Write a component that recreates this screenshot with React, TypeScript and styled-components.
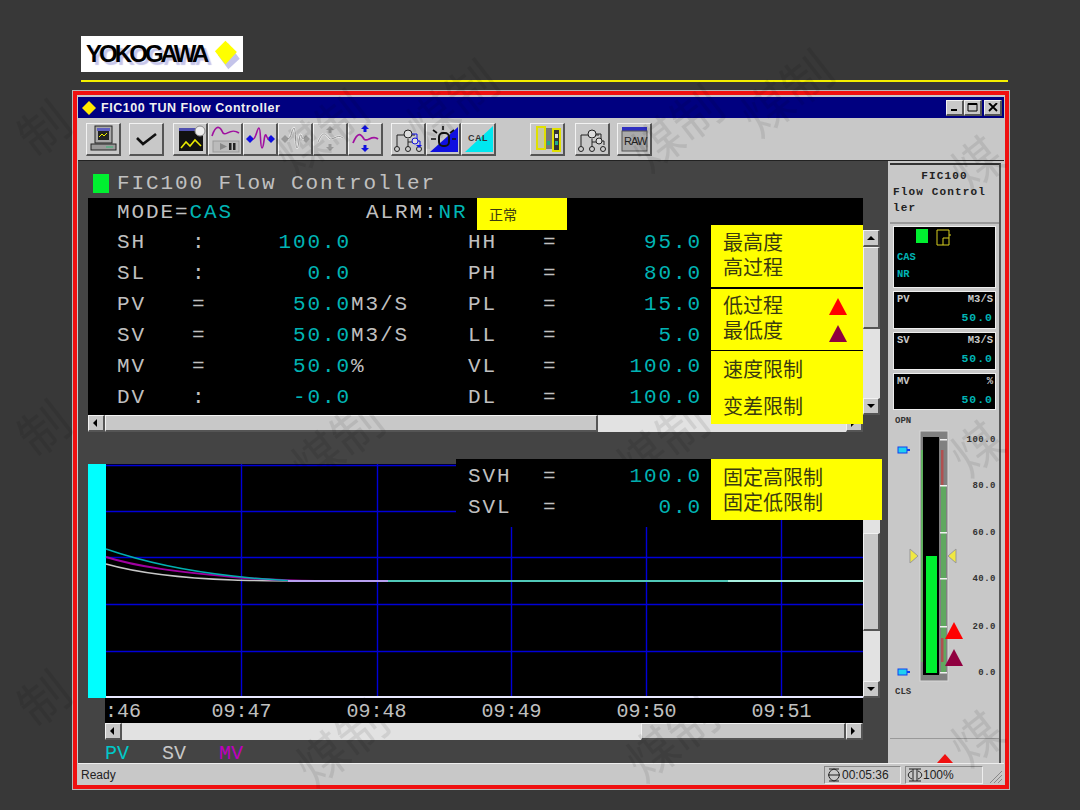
import React from 'react'
import styled, { createGlobalStyle, css } from 'styled-components'

const GRAY = '#c8c8c8'
const TEAL = '#00b4b4'
const MONO = '"Liberation Mono", monospace'
const CJK = '"Noto Sans CJK SC", sans-serif'

const GlobalStyle = createGlobalStyle`
  html, body { margin: 0; padding: 0; background: #383838; }
  * { box-sizing: border-box; }
`

const raised = css`
  border-style: solid;
  border-width: 1px 2px 2px 1px;
  border-color: #f2f2f2 #555 #555 #f2f2f2;
`

const Page = styled.div`
  position: relative;
  width: 1080px;
  height: 810px;
  overflow: hidden;
  padding: 36px 70px 0 72px;
  background: #383838;
`

const LogoBox = styled.div`
  display: flex;
  align-items: center;
  gap: 8px;
  width: 162px;
  height: 36px;
  margin-left: 9px;
  padding-left: 5px;
  background: #fff;
`

const LogoText = styled.span`
  font: bold 24px "Liberation Sans", sans-serif;
  letter-spacing: -2.95px;
  color: #000;
  text-shadow: 3px 3px 1px #c4c4ea;
`

const Rule = styled.div`
  width: 927px;
  height: 2px;
  margin: 8px 0 8px 9px;
  background: #f4f000;
`

const Frame = styled.div`
  width: 938px;
  height: 700px;
  padding: 1px;
  background: #b8b8b8;
`

const RedFrame = styled.div`
  height: 100%;
  border: 4px solid #f01010;
  background: ${GRAY};
  padding: 2px 1px 0;
`

const TitleBar = styled.div`
  display: flex;
  align-items: center;
  height: 21px;
  padding: 0 2px 0 3px;
  background: #000080;
`

const TitleText = styled.span`
  margin-left: 4px;
  font: bold 12.5px "Liberation Sans", sans-serif;
  letter-spacing: 0.54px;
  color: #f0f0f0;
`

const CaptionButtons = styled.div`
  display: flex;
  margin-left: auto;
`

const CaptionButton = styled.div<{ $gap?: number }>`
  display: flex;
  align-items: center;
  justify-content: center;
  width: 18px;
  height: 16px;
  margin-left: ${(p) => p.$gap ?? 0}px;
  background: ${GRAY};
  ${raised}
`

const Toolbar = styled.div`
  display: flex;
  align-items: center;
  height: 42px;
  padding: 0 0 0 8px;
  background: ${GRAY};
`

const ToolGroup = styled.div<{ $after: number }>`
  display: flex;
  margin-right: ${(p) => p.$after}px;
`

const ToolButton = styled.div`
  display: flex;
  align-items: center;
  justify-content: center;
  width: 35px;
  height: 33px;
  background: ${GRAY};
  ${raised}
`

const Body = styled.div`
  display: flex;
  height: 603px;
  border-top: 1px solid #222;
`

const LeftPane = styled.div`
  position: relative;
  width: 810px;
  padding: 2px 0 0 10px;
  background: #444;
`

const Heading = styled.div`
  display: flex;
  align-items: center;
  height: 35px;
  padding: 6px 0 0 5px;
  font: 21px ${MONO};
  letter-spacing: 1.9px;
  color: #c0c0c0;
`

const Lamp = styled.span`
  width: 16px;
  height: 19px;
  margin-right: 8px;
  background: #00f030;
`

const PanelRow = styled.div`
  display: flex;
`

const DataPanel = styled.div`
  width: 775px;
  height: 217px;
  padding-left: 29px;
  background: #000;
  overflow: hidden;
  font: 21px ${MONO};
  letter-spacing: 1.9px;
  color: #c0c0c0;
`

const ModeRow = styled.div`
  display: flex;
  align-items: center;
  height: 30px;
  margin-top: -1px;
`

const ModeCell = styled.span`
  width: 249px;
`

const Teal = styled.span`
  color: ${TEAL};
`

const DataRow = styled.div`
  display: grid;
  grid-template-columns: 75px 40px 119px 117px 75px 40px 119px;
  align-items: center;
  height: 31px;
`

const Value = styled.span`
  text-align: right;
  color: ${TEAL};
`

const VScroll = styled.div<{ $top: number; $height: number }>`
  display: flex;
  flex-direction: column;
  width: 17px;
  height: ${(p) => p.$height}px;
  margin-top: ${(p) => p.$top}px;
  background: #e2e2e2;
`

const HScroll = styled.div<{ $inset?: number }>`
  display: flex;
  width: ${(p) => 775 - (p.$inset ?? 0)}px;
  height: 17px;
  margin-left: ${(p) => p.$inset ?? 0}px;
  background: #e2e2e2;
`

const ScrollArrow = styled.div`
  flex: none;
  display: flex;
  align-items: center;
  justify-content: center;
  width: 17px;
  height: 17px;
  background: ${GRAY};
  font-size: 0;
  ${raised}
`

const Thumb = styled.div<{ $size: number }>`
  flex: 0 0 ${(p) => p.$size}px;
  background: ${GRAY};
  ${raised}
`

const Track = styled.div<{ $size?: number }>`
  flex: ${(p) => (p.$size ? `0 0 ${p.$size}px` : '1')};
`

const ChartGap = styled.div`
  height: 32px;
`

const ChartSvg = styled.svg`
  display: block;
  width: 775px;
  height: 234px;
  background: #000;
`

const TimeAxis = styled.div`
  display: flex;
  align-items: center;
  width: 758px;
  height: 25px;
  margin-left: 17px;
  padding-top: 2px;
  background: #000;
  font: 20px ${MONO};
  color: #c0c0c0;
`

const TimeCell = styled.span<{ $first?: boolean }>`
  flex: 0 0 ${(p) => (p.$first ? 69 : 135)}px;
  text-align: ${(p) => (p.$first ? 'left' : 'center')};
`

const Legend = styled.div`
  display: flex;
  gap: 33px;
  height: 22px;
  padding: 2px 0 0 17px;
  font: 20px/24px ${MONO};
`

const LegendItem = styled.span<{ $color: string }>`
  color: ${(p) => p.$color};
`

const Note = styled.div<{ $left: number; $top: number; $width: number; $height: number }>`
  position: absolute;
  left: ${(p) => p.$left}px;
  top: ${(p) => p.$top}px;
  width: ${(p) => p.$width}px;
  height: ${(p) => p.$height}px;
  padding-left: 12px;
  background: #ffff00;
  font: 20px/25px ${CJK};
  color: #3a3a10;
`

const NoteLine = styled.div<{ $mt?: number }>`
  margin-top: ${(p) => p.$mt ?? 0}px;
`

const SmallNote = styled(Note)`
  font-size: 14px;
  line-height: 32px;
`

const Triangle = styled.span<{ $color: string; $top: number }>`
  position: absolute;
  left: 118px;
  top: ${(p) => p.$top}px;
  width: 0;
  height: 0;
  border-left: 9px solid transparent;
  border-right: 9px solid transparent;
  border-bottom: 17px solid ${(p) => p.$color};
`

const BlackCover = styled.div`
  position: absolute;
  left: 378px;
  top: 298px;
  width: 255px;
  height: 68px;
  padding: 2px 0 0 12px;
  background: #000;
  font: 21px ${MONO};
  letter-spacing: 1.9px;
  color: #c0c0c0;
`

const CoverRow = styled.div`
  display: grid;
  grid-template-columns: 75px 40px 119px;
  align-items: center;
  height: 31px;
`

const Faceplate = styled.div`
  width: 111px;
  margin: 2px 0 0 2px;
  background: ${GRAY};
  border-right: 2px solid #555;
  border-top: 2px solid #333;
  display: flex;
  flex-direction: column;
`

const PlateTitle = styled.div`
  flex: none;
  height: 59px;
  padding: 3px 3px 0;
  border-bottom: 2px solid #999;
  font: bold 11px/16px ${MONO};
  letter-spacing: 1.15px;
  color: #222;
  word-break: break-all;
`

const PlateCenter = styled.div`
  text-align: center;
`

const Readouts = styled.div`
  flex: none;
  display: flex;
  flex-direction: column;
  gap: 3px;
  padding: 2px 3px 0;
`

const Readout = styled.div<{ $height: number }>`
  position: relative;
  height: ${(p) => p.$height}px;
  padding: 0 2px 0 3px;
  background: #000;
  border: 1px solid #eee;
  font: bold 10.5px/14px ${MONO};
  color: ${GRAY};
`

const ReadoutHead = styled.div`
  display: flex;
  justify-content: space-between;
`

const ReadoutValue = styled.div`
  margin-top: 5px;
  text-align: right;
  font-size: 11.5px;
  letter-spacing: 1px;
  color: ${TEAL};
`

const ModeLine = styled.div<{ $mt: number }>`
  margin-top: ${(p) => p.$mt}px;
  color: ${TEAL};
`

const LampRow = styled.div`
  display: flex;
  align-items: flex-start;
  gap: 8px;
  padding: 2px 0 0 19px;
`

const PlateLamp = styled.span`
  width: 12px;
  height: 14px;
  background: #00f030;
`

const GaugeSvg = styled.svg`
  display: block;
  flex: none;
  width: 109px;
  height: 328px;
`

const PlateFoot = styled.div`
  position: relative;
  flex: 1;
  border-top: 1px solid #999;
  overflow: hidden;
`

const FootMark = styled.span`
  position: absolute;
  left: 47px;
  bottom: 0;
  width: 0;
  height: 0;
  border-left: 8px solid transparent;
  border-right: 8px solid transparent;
  border-bottom: 9px solid #f01010;
`

const StatusBar = styled.div`
  display: flex;
  align-items: center;
  height: 22px;
  padding: 0 0 0 3px;
  border-top: 1px solid #eee;
  font: 12px "Liberation Sans", sans-serif;
  color: #222;
`

const StatusCell = styled.div<{ $width: number; $first?: boolean }>`
  display: flex;
  align-items: center;
  width: ${(p) => p.$width}px;
  height: 18px;
  margin-left: ${(p) => (p.$first ? 'auto' : '4px')};
  padding-left: 1px;
  border: 1px solid;
  border-color: #888 #eee #eee #888;
`

const Grip = styled.svg`
  width: 19px;
  height: 18px;
  margin-left: 2px;
`

const Watermark = styled.div<{ $x: number; $y: number }>`
  position: absolute;
  left: ${(p) => p.$x}px;
  top: ${(p) => p.$y}px;
  font: 50px ${CJK};
  color: #000;
  opacity: 0.08;
  white-space: nowrap;
  transform: rotate(-38deg);
  pointer-events: none;
`

const marks: [number, number, string][] = [
  [17, 90, '制'], [270, 95, '煤制'], [400, 65, '煤制'], [625, 90, '煤制'], [735, 55, '煤制'],
  [950, 125, '煤'], [17, 390, '制'], [285, 405, '煤制'], [610, 405, '煤制'], [950, 410, '煤'],
  [17, 660, '制'], [290, 705, '煤制'], [620, 700, '煤制'], [950, 700, '煤'],
]

const upper = [
  ['SH', ':', '100.0', '', 'HH', '=', '95.0'],
  ['SL', ':', '0.0', '', 'PH', '=', '80.0'],
  ['PV', '=', '50.0', 'M3/S', 'PL', '=', '15.0'],
  ['SV', '=', '50.0', 'M3/S', 'LL', '=', '5.0'],
  ['MV', '=', '50.0', '%', 'VL', '=', '100.0'],
  ['DV', ':', '-0.0', '', 'DL', '=', '100.0'],
]

const Arrow = ({ dir }: { dir: 'up' | 'down' | 'left' | 'right' }) => {
  const pts = {
    up: '1,6 9,6 5,2',
    down: '1,2 9,2 5,6',
    left: '6,0 6,8 2,4',
    right: '2,0 2,8 6,4',
  }[dir]
  return (
    <svg width="10" height="8" viewBox="0 0 10 8">
      <polygon points={pts} fill="#000" />
    </svg>
  )
}

const Ico = ({ children }: { children: React.ReactNode }) => (
  <svg width="31" height="29" viewBox="0 0 31 29">
    {children}
  </svg>
)

const Diamonds = ({ color }: { color: string }) => (
  <>
    <polygon points="1,15 5,11 9,15 5,19" fill={color} />
    <polygon points="22,15 26,11 30,15 26,19" fill={color} />
  </>
)

const TreeIcon = ({ blue }: { blue?: boolean }) => (
  <Ico>
    <path d="M4 24V11H11M19 11H22" stroke="#222" fill="none" />
    <path d="M15 15V18H24" stroke="#222" fill="none" />
    <circle cx="15" cy="10" r="4" fill="#ddd" stroke="#222" />
    <circle cx="4" cy="25" r="2.5" fill="#ccc" stroke="#222" />
    <circle cx="15" cy="25" r="2.5" fill="#ccc" stroke="#222" />
    <circle cx="26" cy="25" r="2.5" fill="#ccc" stroke="#222" />
    <path d="M15 18V23" stroke="#222" />
    <path d="M19 10H24V17H27V21" stroke={blue ? '#1010e0' : '#222'} fill="none" />
    <circle cx="22" cy="17" r="3" fill="#ddd" stroke={blue ? '#1010e0' : '#222'} />
    {blue && <polygon points="23,21 29,21 26,24" fill="#1010e0" />}
  </Ico>
)

const tools = [
  [
    <Ico key="pc">
      <rect x="7" y="2" width="17" height="17" fill="#aaa" stroke="#222" />
      <rect x="9" y="4" width="13" height="3" fill="#6060c0" />
      <rect x="10" y="7" width="11" height="9" fill="#222" />
      <path d="M11 13L14 10L16 12L19 9" stroke="#f0f000" fill="none" />
      <rect x="3" y="20" width="25" height="6" fill="#999" stroke="#222" />
      <rect x="18" y="22" width="7" height="2" fill="#6a8" />
    </Ico>,
  ],
  [
    <Ico key="check">
      <path d="M6 14L12 20L25 10" stroke="#111" strokeWidth="2.6" fill="none" />
    </Ico>,
  ],
  [
    <Ico key="trend">
      <rect x="4" y="4" width="24" height="3" fill="#5050b0" />
      <rect x="4" y="7" width="24" height="20" fill="#111" />
      <path d="M6 24L11 18L15 22L20 16L26 22" stroke="#e8e800" strokeWidth="1.6" fill="none" />
      <circle cx="25" cy="7" r="5" fill="#eee" stroke="#888" />
    </Ico>,
    <Ico key="pause">
      <path d="M2 12C6 0 10 2 13 9C16 13 20 3 29 9" stroke="#a010a0" strokeWidth="1.6" fill="none" />
      <rect x="3" y="17" width="26" height="11" fill="#bbb" stroke="#999" />
      <polygon points="10,19 10,26 17,22.5" fill="#888" />
      <rect x="19" y="19" width="2.5" height="7" fill="#222" />
      <rect x="23" y="19" width="2.5" height="7" fill="#222" />
    </Ico>,
    <Ico key="spread">
      <Diamonds color="#1010e0" />
      <path d="M8 15C11 15 12 4 14 4C16 4 15 24 17 24C19 24 19 9 21 11C22 13 22 15 24 15" stroke="#a010a0" strokeWidth="1.6" fill="none" />
    </Ico>,
    <Ico key="spread-off">
      <Diamonds color="#999" />
      <path d="M8 15C11 15 12 4 14 4C16 4 15 24 17 24C19 24 19 9 21 11C22 13 22 15 24 15" stroke="#eee" strokeWidth="2.4" fill="none" />
      <path d="M8 15C11 15 12 4 14 4C16 4 15 24 17 24C19 24 19 9 21 11C22 13 22 15 24 15" stroke="#999" fill="none" />
    </Ico>,
    <Ico key="shift-off">
      <polygon points="15,2 11,6 19,6" fill="#999" />
      <rect x="13.5" y="6" width="3" height="3" fill="#999" />
      <polygon points="15,27 11,23 19,23" fill="#999" />
      <rect x="13.5" y="20" width="3" height="3" fill="#999" />
      <path d="M3 18C8 6 11 10 14 14C17 18 22 9 28 14" stroke="#eee" strokeWidth="2.2" fill="none" />
      <path d="M3 18C8 6 11 10 14 14C17 18 22 9 28 14" stroke="#999" fill="none" />
    </Ico>,
    <Ico key="shift">
      <polygon points="15,1 11,5 19,5" fill="#1010e0" />
      <rect x="13.5" y="5" width="3" height="3" fill="#1010e0" />
      <polygon points="15,28 11,24 19,24" fill="#1010e0" />
      <rect x="13.5" y="21" width="3" height="3" fill="#1010e0" />
      <path d="M3 19C8 7 11 10 14 15C17 19 22 10 28 15" stroke="#a010a0" strokeWidth="1.8" fill="none" />
    </Ico>,
  ],
  [
    <TreeIcon key="tree-blue" blue />,
    <Ico key="tune">
      <polygon points="30,3 30,28 2,28" fill="#1010e0" />
      <rect x="11" y="9" width="10" height="13" rx="4" fill="none" stroke="#111" strokeWidth="2" />
      <path d="M5 6L9 9M15 2V6M26 6L22 9M3 15H8M24 15H28" stroke="#111" strokeWidth="1.6" />
    </Ico>,
    <Ico key="cal">
      <polygon points="30,2 30,28 2,28" fill="#00e8f0" />
      <text x="5" y="17" fontFamily="Liberation Sans" fontWeight="bold" fontSize="9" letterSpacing="0.5" fill="#333">CAL</text>
    </Ico>,
  ],
  [
    <Ico key="modules">
      <rect x="13" y="4" width="8" height="21" fill="#777" />
      <rect x="5" y="3" width="8" height="22" fill="#c8c8a0" stroke="#e0e000" strokeWidth="2" />
      <rect x="21" y="5" width="7" height="22" fill="#333" stroke="#e0e000" strokeWidth="2" />
      <rect x="23" y="10" width="3" height="4" fill="#ddd" />
      <rect x="23" y="17" width="3" height="4" fill="#2a8" />
      <rect x="15" y="17" width="3" height="4" fill="#2a8" />
    </Ico>,
  ],
  [<TreeIcon key="tree" />],
  [
    <Ico key="raw">
      <rect x="3" y="3" width="25" height="4" fill="#3030c0" />
      <rect x="3" y="7" width="25" height="20" fill="#aaa" stroke="#555" />
      <text x="5" y="21" fontFamily="Liberation Sans" fontSize="11" letterSpacing="-0.9" fill="#222">RAW</text>
    </Ico>,
  ],
]

const groupGaps = [8, 9, 8, 34, 10, 7, 0]

const hLines = [1, 47, 93, 140, 187]
const vLines = [153, 289, 423, 558, 693]

const Trend = () => (
  <ChartSvg viewBox="0 0 775 234">
    <rect x="0" y="0" width="18" height="235" fill="#00ffff" />
    {hLines.map((y) => (
      <line key={y} x1="18" x2="775" y1={y + 0.5} y2={y + 0.5} stroke="#0000d8" strokeWidth="1.4" />
    ))}
    {vLines.map((x) => (
      <line key={x} x1={x + 0.5} x2={x + 0.5} y1="0" y2="234" stroke="#0000d8" strokeWidth="1.4" />
    ))}
    <line x1="18" x2="775" y1="233" y2="233" stroke="#e8e8ff" strokeWidth="2" />
    <path d="M18 100C50 109 90 114 145 116C170 117 190 117 227 117" stroke="#c8c8c8" fill="none" strokeWidth="1.5" />
    <path d="M18 93C50 103 90 108 145 113C170 115 200 117 227 117" stroke="#a000a0" fill="none" strokeWidth="2" />
    <path d="M18 85C50 96 90 106 145 112C170 115 190 117 227 117" stroke="#00b0b0" fill="none" strokeWidth="1.5" />
    <line x1="200" x2="305" y1="117" y2="117" stroke="#b8a0f0" strokeWidth="2" />
    <line x1="300" x2="640" y1="117" y2="117" stroke="#50c8b8" strokeWidth="2" />
    <line x1="640" x2="775" y1="117" y2="117" stroke="#a8f0e0" strokeWidth="2" />
  </ChartSvg>
)

const Pin = ({ y }: { y: number }) => (
  <g>
    <rect x="8" y={y - 3} width="9" height="6" fill="#20d0f0" stroke="#1040f0" />
    <rect x="17" y={y - 1} width="3" height="2" fill="#1040f0" />
  </g>
)

const scale = [
  ['100.0', 29], ['80.0', 75], ['60.0', 122], ['40.0', 168], ['20.0', 216], ['0.0', 262],
] as const

// origin of this drawing sits at x=890, y=410 of the page
const Gauge = () => (
  <GaugeSvg viewBox="0 0 109 328">
    <g fontFamily="Liberation Mono" fontWeight="bold" fontSize="9" fill="#333">
      <text x="5" y="13">OPN</text>
      <text x="5" y="284">CLS</text>
      {scale.map(([t, y]) => (
        <text key={t} x="106" y={y + 3} textAnchor="end" letterSpacing="0.5">{t}</text>
      ))}
    </g>
    <Pin y={40} />
    <Pin y={262} />
    <rect x="30" y="21" width="28" height="250" fill="#808080" stroke="#d8d8d8" />
    <rect x="31" y="40" width="3" height="212" fill="#60b060" />
    <rect x="33" y="27" width="16" height="238" fill="#000" />
    <rect x="36" y="146" width="11" height="117" fill="#00f030" />
    <rect x="51" y="75" width="5" height="187" fill="#60a860" />
    <rect x="51" y="40" width="2.5" height="35" fill="#b05050" />
    <rect x="51" y="228" width="2.5" height="24" fill="#b05050" />
    {[29, 75, 122, 168, 216, 262].map((y) => (
      <rect key={y} x="50" y={y} width="7" height="1.5" fill="#f0f0f0" />
    ))}
    <polygon points="20,139 20,153 28,146" fill="#f0e840" stroke="#999" />
    <polygon points="66,139 66,153 58,146" fill="#f0e840" stroke="#999" />
    <polygon points="55,229 64,212 73,229" fill="#ff0000" />
    <polygon points="55,256 64,239 73,256" fill="#900040" />
  </GaugeSvg>
)

export default function App() {
  return (
    <Page>
      <GlobalStyle />
      <LogoBox>
        <LogoText>YOKOGAWA</LogoText>
        <svg width="30" height="32" viewBox="0 0 30 32">
          <polygon points="4,17 15,5 27,21 15,32" fill="#c4c4ea" />
          <polygon points="1,13 12,2 24,14 12,27" fill="#ffff00" />
        </svg>
      </LogoBox>
      <Rule />
      <Frame>
        <RedFrame>
          <TitleBar>
            <svg width="16" height="16" viewBox="0 0 16 16">
              <polygon points="8,1 15,8 8,15 1,8" fill="#ffe800" />
            </svg>
            <TitleText>FIC100 TUN Flow Controller</TitleText>
            <CaptionButtons>
              <CaptionButton>
                <svg width="10" height="9" viewBox="0 0 10 9"><rect x="1" y="6" width="6" height="2" fill="#000" /></svg>
              </CaptionButton>
              <CaptionButton>
                <svg width="11" height="10" viewBox="0 0 11 10"><path d="M1 1.5H10V9H1Z" fill="none" stroke="#000" /><rect x="1" y="1" width="9" height="2" /></svg>
              </CaptionButton>
              <CaptionButton $gap={2}>
                <svg width="10" height="9" viewBox="0 0 10 9"><path d="M1 0L9 8M9 0L1 8" stroke="#000" strokeWidth="1.8" /></svg>
              </CaptionButton>
            </CaptionButtons>
          </TitleBar>
          <Toolbar>
            {tools.map((group, i) => (
              <ToolGroup key={i} $after={groupGaps[i]}>
                {group.map((icon, j) => (
                  <ToolButton key={j}>{icon}</ToolButton>
                ))}
              </ToolGroup>
            ))}
          </Toolbar>
          <Body>
            <LeftPane>
              <Heading>
                <Lamp />
                FIC100 Flow Controller
              </Heading>
              <PanelRow>
                <DataPanel>
                  <ModeRow>
                    <ModeCell>MODE=<Teal>CAS</Teal></ModeCell>
                    <span>ALRM:<Teal>NR</Teal></span>
                  </ModeRow>
                  {upper.map((r) => (
                    <DataRow key={r[0]}>
                      <span>{r[0]}</span>
                      <span>{r[1]}</span>
                      <Value>{r[2]}</Value>
                      <span>{r[3]}</span>
                      <span>{r[4]}</span>
                      <span>{r[5]}</span>
                      <Value>{r[6]}</Value>
                    </DataRow>
                  ))}
                </DataPanel>
                <VScroll $top={32} $height={185}>
                  <ScrollArrow><Arrow dir="up" /></ScrollArrow>
                  <Thumb $size={82} />
                  <Track />
                  <ScrollArrow><Arrow dir="down" /></ScrollArrow>
                </VScroll>
              </PanelRow>
              <HScroll>
                <ScrollArrow><Arrow dir="left" /></ScrollArrow>
                <Thumb $size={493} />
                <Track />
                <ScrollArrow><Arrow dir="right" /></ScrollArrow>
              </HScroll>
              <ChartGap />
              <PanelRow>
                <Trend />
                <VScroll $top={0} $height={234}>
                  <Track $size={69} />
                  <Thumb $size={98} />
                  <Track />
                  <ScrollArrow><Arrow dir="down" /></ScrollArrow>
                </VScroll>
              </PanelRow>
              <TimeAxis>
                <TimeCell $first>:46</TimeCell>
                {['09:47', '09:48', '09:49', '09:50', '09:51'].map((t) => (
                  <TimeCell key={t}>{t}</TimeCell>
                ))}
              </TimeAxis>
              <HScroll $inset={17}>
                <ScrollArrow><Arrow dir="left" /></ScrollArrow>
                <Track />
                <Thumb $size={205} />
                <ScrollArrow><Arrow dir="right" /></ScrollArrow>
              </HScroll>
              <Legend>
                <LegendItem $color="#00c8c8">PV</LegendItem>
                <LegendItem $color="#c8c8c8">SV</LegendItem>
                <LegendItem $color="#c000c0">MV</LegendItem>
              </Legend>

              <SmallNote $left={399} $top={37} $width={90} $height={32}>正常</SmallNote>
              <Note $left={633} $top={64} $width={152} $height={62}>
                <NoteLine $mt={4}>最高度</NoteLine>
                <NoteLine>高过程</NoteLine>
              </Note>
              <Note $left={633} $top={128} $width={152} $height={61}>
                <NoteLine $mt={3}>低过程</NoteLine>
                <NoteLine>最低度</NoteLine>
                <Triangle $color="#ff0000" $top={9} />
                <Triangle $color="#900040" $top={36} />
              </Note>
              <Note $left={633} $top={190} $width={152} $height={73}>
                <NoteLine $mt={5}>速度限制</NoteLine>
                <NoteLine $mt={12}>变差限制</NoteLine>
              </Note>
              <BlackCover>
                <CoverRow><span>SVH</span><span>=</span><Value>100.0</Value></CoverRow>
                <CoverRow><span>SVL</span><span>=</span><Value>0.0</Value></CoverRow>
              </BlackCover>
              <Note $left={633} $top={298} $width={171} $height={61}>
                <NoteLine $mt={5}>固定高限制</NoteLine>
                <NoteLine>固定低限制</NoteLine>
              </Note>
            </LeftPane>
            <Faceplate>
              <PlateTitle>
                <PlateCenter>FIC100</PlateCenter>
                Flow Control ler
              </PlateTitle>
              <Readouts>
                <Readout $height={62}>
                  <LampRow>
                    <PlateLamp />
                    <svg width="15" height="17" viewBox="0 0 15 17">
                      <path d="M1 1H13V16H1ZM7 16V9H13M13 6H15" fill="none" stroke="#d8d020" />
                    </svg>
                  </LampRow>
                  <ModeLine $mt={4}>CAS</ModeLine>
                  <ModeLine $mt={3}>NR</ModeLine>
                </Readout>
                <Readout $height={38}>
                  <ReadoutHead><span>PV</span><span>M3/S</span></ReadoutHead>
                  <ReadoutValue>50.0</ReadoutValue>
                </Readout>
                <Readout $height={38}>
                  <ReadoutHead><span>SV</span><span>M3/S</span></ReadoutHead>
                  <ReadoutValue>50.0</ReadoutValue>
                </Readout>
                <Readout $height={37}>
                  <ReadoutHead><span>MV</span><span>%</span></ReadoutHead>
                  <ReadoutValue>50.0</ReadoutValue>
                </Readout>
              </Readouts>
              <Gauge />
              <PlateFoot><FootMark /></PlateFoot>
            </Faceplate>
          </Body>
          <StatusBar>
            Ready
            <StatusCell $first $width={77}>
              <svg width="16" height="14" viewBox="0 0 16 14">
                <path d="M3 1H13M3 13H13M8 1C1 3 1 11 8 13C15 11 15 3 8 1M2 7H14" fill="none" stroke="#222" />
              </svg>
              00:05:36
            </StatusCell>
            <StatusCell $width={78}>
              <svg width="16" height="14" viewBox="0 0 16 14">
                <path d="M2 1H14M2 13H14M6 1V13M10 1V13M5 3C0 5 0 9 5 11M11 3C16 5 16 9 11 11" fill="none" stroke="#222" />
              </svg>
              100%
            </StatusCell>
            <Grip viewBox="0 0 19 18">
              <path d="M5 17L17 5M9 17L17 9M13 17L17 13" stroke="#888" />
            </Grip>
          </StatusBar>
        </RedFrame>
      </Frame>
      {marks.map(([x, y, t]) => (
        <Watermark key={`${x}-${y}`} $x={x} $y={y}>{t}</Watermark>
      ))}
    </Page>
  )
}
